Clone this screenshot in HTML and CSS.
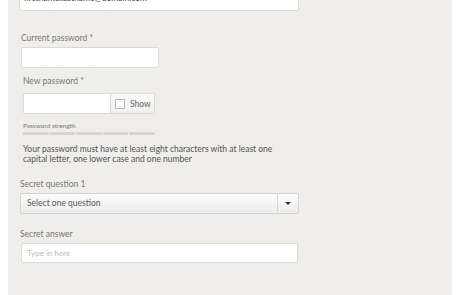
FILE: index.html
```html
<!DOCTYPE html>
<html lang="en">

<head>
  <meta charset="UTF-8" />
  <title>Account details</title>
  <link rel="stylesheet" href="styles.css">
</head>

<body>
  <div class="panel">
    <div class="field email">firstname.lastname@domain.com</div>

    <label class="label first">Current password *</label>
    <div class="field short"></div>

    <label class="label indent">New password *</label>
    <div class="pwrow">
      <div class="field pwinput"></div>
      <div class="show"><span class="box"></span>Show</div>
    </div>

    <div class="strength">
      <div class="strength-label">Password strength</div>
      <div class="bars">
        <span></span><span></span><span></span><span></span><span></span>
      </div>
    </div>

    <p class="hint">Your password must have at least eight characters with at least one capital letter, one lower case and one number</p>

    <label class="label question-label">Secret question 1</label>
    <div class="select">
      <div class="select-text">Select one question</div>
      <div class="select-arrow"><span class="tri"></span></div>
    </div>

    <label class="label answer-label">Secret answer</label>
    <div class="field answer">Type in here</div>
  </div>
</body>

</html>
```

FILE: styles.css
```css
* {
  margin: 0;
  padding: 0;
  box-sizing: border-box;
  font-family: Lato, "Open Sans", Arial, sans-serif;
}

body {
  background: #fff;
  height: 295px;
  overflow: hidden;
}

.panel {
  display: flow-root;
  margin-left: 8px;
  width: 444px;
  height: 295px;
  background-color: #efeeea;
  padding-left: 12px;
}

.field {
  background: #fff;
  border: 1px solid #dcdad5;
  border-radius: 2px;
}

.email {
  width: 280px;
  height: 21px;
  margin-top: -10px;
  margin-left: -1px;
  padding: 0 4px;
  font-size: 8.5px;
  line-height: 14px;
  color: #444;
}

.label {
  display: block;
  font-size: 8.5px;
  color: #777;
  line-height: 10px;
}

.label.first {
  margin-top: 22px;
  margin-left: 1px;
  margin-bottom: 4px;
}

.short {
  width: 138px;
  height: 21px;
  margin-left: 1px;
}

.indent {
  margin-top: 8px;
  margin-left: 3px;
  margin-bottom: 7px;
}

.pwrow {
  display: flex;
  margin-left: 3px;
  width: 132px;
  height: 21px;
}

.pwinput {
  width: 88px;
  height: 21px;
  border-radius: 2px 0 0 2px;
}

.show {
  flex: 1;
  display: flex;
  align-items: center;
  gap: 5px;
  padding-left: 4px;
  border: 1px solid #dcdad5;
  border-left: none;
  border-radius: 0 2px 2px 0;
  background: linear-gradient(#fafafa, #efefef);
  font-size: 8.5px;
  color: #666;
}

.box {
  width: 10px;
  height: 10px;
  border: 1px solid #bbb;
  background: #fff;
}

.strength {
  margin: 8px 0 0 3px;
}

.strength-label {
  font-size: 6.5px;
  color: #777;
  line-height: 7px;
}

.bars {
  display: flex;
  gap: 1px;
  margin-top: 3px;
  width: 132px;
}

.bars span {
  flex: 1;
  height: 3px;
  background: #d9d6ce;
}

.hint {
  margin: 9px 0 0 3px;
  font-size: 8.5px;
  line-height: 10px;
  color: #555;
  width: 270px;
}

.question-label {
  margin-top: 15px;
  margin-bottom: 4px;
}

.select {
  display: flex;
  width: 279px;
  height: 21px;
  border: 1px solid #d5d3ce;
  border-radius: 2px;
  background: linear-gradient(#fdfdfd, #ececec);
}

.select-text {
  flex: 1;
  font-size: 8.5px;
  line-height: 19px;
  padding-left: 6px;
  color: #555;
  border-right: 1px solid #d8d6d1;
}

.select-arrow {
  width: 20px;
  display: flex;
  align-items: center;
  justify-content: center;
}

.tri {
  width: 0;
  height: 0;
  border-left: 3px solid transparent;
  border-right: 3px solid transparent;
  border-top: 3px solid #333;
}

.answer-label {
  margin-top: 15px;
  margin-bottom: 4px;
}

.answer {
  width: 277px;
  height: 20px;
  margin-left: 1px;
  padding-left: 5px;
  font-size: 8px;
  line-height: 18px;
  color: #bbb;
}
```
